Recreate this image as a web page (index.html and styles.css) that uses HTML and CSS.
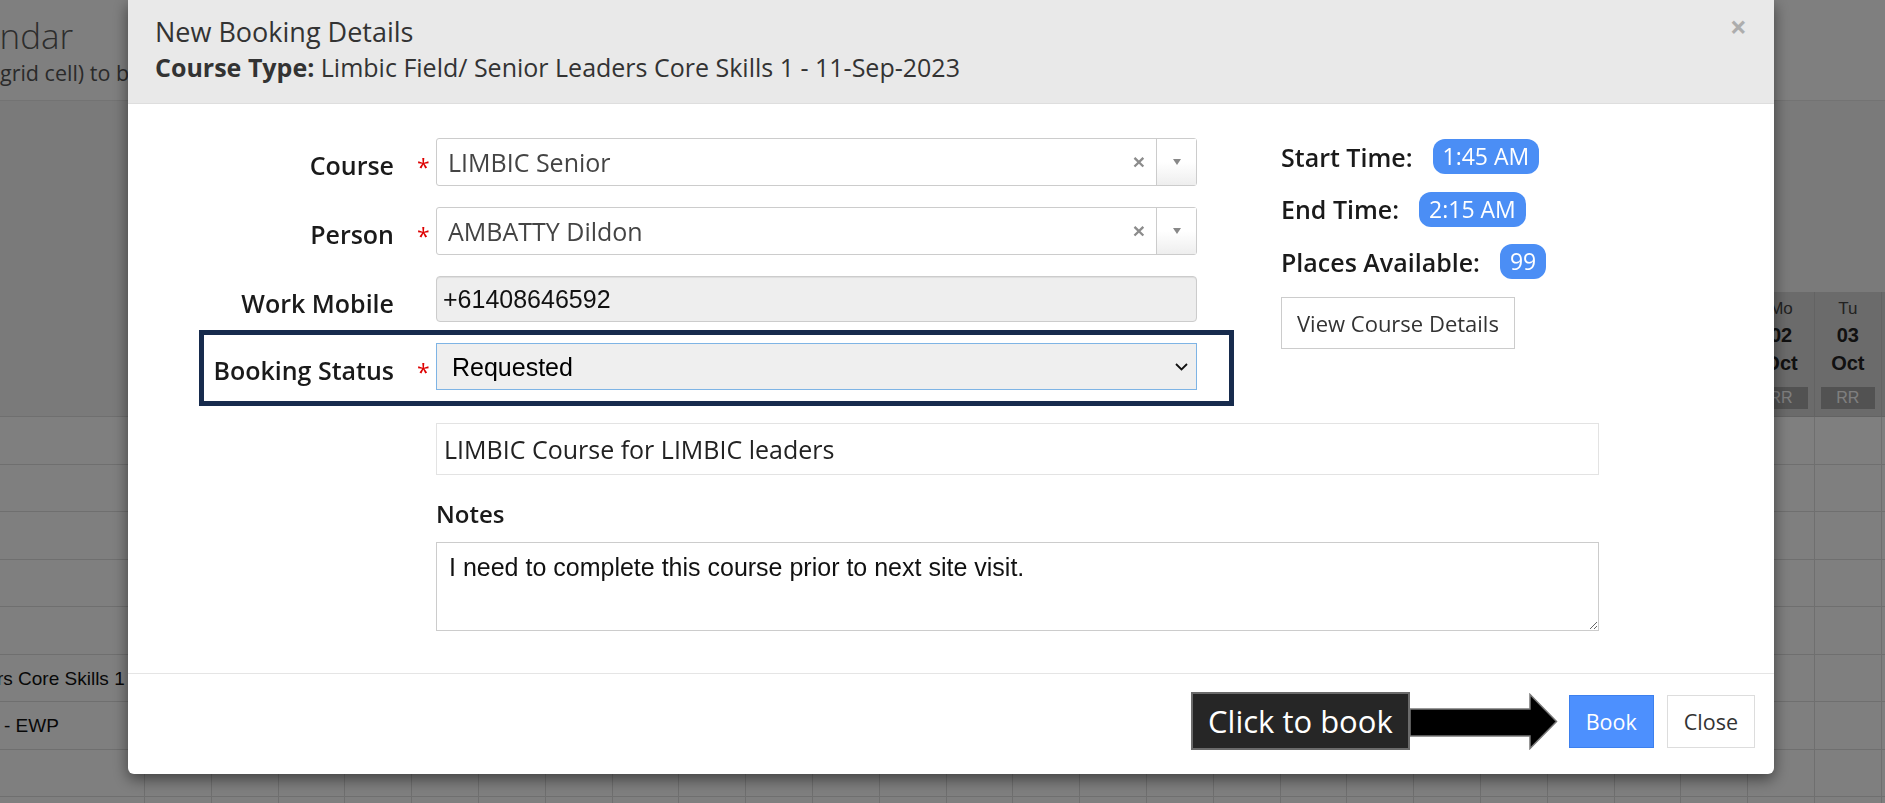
FILE: index.html
```html
<!DOCTYPE html>
<html>
<head>
  <meta charset="UTF-8" />
  <title>Course Calendar: New Booking</title>
  <link rel="stylesheet" href="styles.css">
  <script src="calendar.js"></script>
</head>
<body>
  <div class="page">
    <header class="page-head">
      <h1>Course Calendar</h1>
      <p>Click a time slot (grid cell) to book a course.</p>
    </header>
    <div class="filters"></div>
    <div class="calendar" id="calendar"></div>
  </div>

  <div class="backdrop"></div>

  <div class="modal">
    <div class="modal-header">
      <span class="close">&times;</span>
      <h4>New Booking Details</h4>
      <div class="course-type"><b>Course Type:</b> Limbic Field/ Senior Leaders Core Skills 1 - 11-Sep-2023</div>
    </div>

    <div class="modal-body">
      <div class="top">
        <div class="form">
          <div class="row">
            <label>Course</label>
            <span class="req">*</span>
            <div class="select2">
              <span class="value">LIMBIC Senior</span>
              <span class="clear">&times;</span>
              <span class="arrow"><b></b></span>
            </div>
          </div>
          <div class="row">
            <label>Person</label>
            <span class="req">*</span>
            <div class="select2">
              <span class="value">AMBATTY Dildon</span>
              <span class="clear">&times;</span>
              <span class="arrow"><b></b></span>
            </div>
          </div>
          <div class="row">
            <label>Work Mobile</label>
            <span class="req"></span>
            <input class="mobile" type="text" value="+61408646592" readonly />
          </div>
          <div class="row highlight">
            <label>Booking Status</label>
            <span class="req">*</span>
            <div class="status">
              <select>
                <option>Requested</option>
                <option>Confirmed</option>
                <option>Cancelled</option>
              </select>
              <svg viewBox="0 0 13 8" width="13" height="8"><path d="M1 1l5.5 5.5L12 1" fill="none" stroke="#111" stroke-width="1.8"/></svg>
            </div>
          </div>
        </div>

        <div class="info">
          <div class="info-row"><span class="info-label">Start Time:</span><span class="badge">1:45 AM</span></div>
          <div class="info-row"><span class="info-label">End Time:</span><span class="badge">2:15 AM</span></div>
          <div class="info-row"><span class="info-label">Places Available:</span><span class="badge">99</span></div>
          <button class="btn">View Course Details</button>
        </div>
      </div>

      <input class="description" type="text" value="LIMBIC Course for LIMBIC leaders" readonly />
      <div class="notes-label">Notes</div>
      <textarea class="notes">I need to complete this course prior to next site visit.</textarea>
    </div>

    <div class="modal-footer">
      <div class="callout">Click to book</div>
      <svg class="pointer" viewBox="0 0 148 57" width="148" height="57">
        <polygon points="0,16 120,16 120,1.5 146.5,28.5 120,55.5 120,43 0,43" fill="#000" stroke="#777" stroke-width="1.5"/>
      </svg>
      <button class="btn btn-primary">Book</button>
      <button class="btn">Close</button>
    </div>
  </div>
</body>
</html>
```

FILE: styles.css
```css
body {
  margin: 0;
  width: 1885px;
  height: 803px;
  overflow: hidden;
  background: #fff;
  font-family: "Open Sans", sans-serif;
  color: #333;
}

/* page behind the dialog, scrolled sideways */
.page {
  margin-left: -239px;
  width: 2600px;
}
.page-head {
  height: 100px;
  border-bottom: 1px solid #e6e6e6;
  white-space: nowrap;
}
.page-head h1 {
  margin: 0;
  padding: 14px 0 0 50px;
  font-size: 35px;
  font-weight: 300;
  line-height: 44px;
  color: #5a5a5a;
}
.page-head p {
  margin: 0;
  padding-left: 71px;
  font-size: 21.5px;
  line-height: 30px;
  color: #555;
}
.filters {
  height: 191px;
  background: #f4f4f4;
}

.calendar {
  display: grid;
  grid-template-columns: 384px repeat(28, 66.8px);
  grid-template-rows: 125px;
  grid-auto-rows: 47.5px;
  font-family: "Liberation Sans", Arial, sans-serif;
}
.calendar .cell {
  box-sizing: border-box;
  border-right: 1px solid #dedede;
  border-bottom: 1px solid #dedede;
}
.calendar .name-head {
  background: #f4f4f4;
}
.calendar .day-head {
  padding-top: 7px;
  background: #d6d6d6;
  border-right-color: #c6c6c6;
  border-bottom-color: #c6c6c6;
  text-align: center;
}
.calendar .dow {
  font-size: 17px;
  line-height: 20px;
  color: #444;
}
.calendar .date,
.calendar .month {
  font-size: 20px;
  font-weight: bold;
  line-height: 28px;
  color: #222;
}
.calendar .date {
  margin-top: 2px;
}
.calendar .tag {
  margin: 10px 6px 0;
  height: 22px;
  line-height: 22px;
  font-size: 16px;
  background: #a4a4a4;
  color: #fff;
}
.calendar .name {
  padding-left: 11px;
  font-size: 19px;
  line-height: 47.5px;
  white-space: nowrap;
  color: #111;
}

/* dialog */
.backdrop {
  position: fixed;
  inset: 0;
  background: rgba(0, 0, 0, 0.5);
}
.modal {
  position: fixed;
  top: 0;
  left: 128px;
  width: 1646px;
  background: #fff;
  border-radius: 0 0 6px 6px;
  box-shadow: 0 5px 15px rgba(0, 0, 0, 0.5);
}

.modal-header {
  position: relative;
  padding: 15px 27px 21px;
  background: #e9e9e9;
  border-bottom: 1px solid #dedede;
}
.modal-header h4 {
  margin: 0;
  font-size: 27px;
  font-weight: 400;
  line-height: 34px;
  color: #333;
}
.modal-header .course-type {
  margin-top: 3px;
  font-size: 25px;
  line-height: 30px;
  color: #333;
}
.modal-header .close {
  position: absolute;
  top: 12px;
  right: 27px;
  font-size: 30px;
  font-weight: 700;
  line-height: 30px;
  color: #000;
  opacity: 0.25;
}

.modal-body {
  padding: 29px 0 42px;
}
.top {
  display: flex;
}
.form {
  margin-left: 71px;
}
.row {
  display: grid;
  grid-template-columns: 190px 42px 761px;
  align-items: start;
  border: 5px solid transparent;
  padding-right: 32px;
  margin-bottom: 11px;
}
.row > label {
  padding-top: 10px;
  font-size: 25px;
  font-weight: 600;
  line-height: 34px;
  text-align: right;
  white-space: nowrap;
  color: #1a1a1a;
}
.row > .req {
  padding: 12px 0 0 23px;
  font-size: 23px;
  line-height: 34px;
  color: #d00;
}
.row.highlight {
  margin-top: -8px;
  margin-bottom: 0;
  padding-top: 8px;
  padding-bottom: 11px;
  border-color: #172b4d;
}

.select2 {
  display: flex;
  align-items: center;
  box-sizing: border-box;
  height: 48px;
  background: #fff;
  border: 1px solid #ccc;
  border-radius: 3px;
}
.select2 .value {
  flex: 1;
  padding-left: 11px;
  font-size: 25px;
  line-height: 46px;
  color: #444;
}
.select2 .clear {
  width: 34px;
  text-align: center;
  font-family: "Liberation Sans", Arial, sans-serif;
  font-size: 21px;
  font-weight: bold;
  color: #8c8c8c;
}
.select2 .arrow {
  display: flex;
  align-items: center;
  justify-content: center;
  align-self: stretch;
  width: 39px;
  border-left: 1px solid #ccc;
  background: linear-gradient(#fff 50%, #eee);
}
.select2 .arrow b {
  border-left: 4px solid transparent;
  border-right: 4px solid transparent;
  border-top: 6px solid #888;
}

.mobile {
  box-sizing: border-box;
  width: 761px;
  height: 46px;
  margin: 0;
  padding: 0 6px;
  border: 1px solid #ccc;
  border-radius: 4px;
  background: #eee;
  box-shadow: inset 0 1px 1px rgba(0, 0, 0, 0.075);
  font-family: "Liberation Sans", Arial, sans-serif;
  font-size: 25px;
  color: #111;
}

.status {
  position: relative;
}
.status select {
  appearance: none;
  box-sizing: border-box;
  width: 100%;
  height: 47px;
  margin: 0;
  padding: 0 40px 0 15px;
  border: 1px solid #7eb4e5;
  border-radius: 0;
  background: #efefef;
  font-family: "Liberation Sans", Arial, sans-serif;
  font-size: 25px;
  color: #000;
}
.status svg {
  position: absolute;
  top: 20px;
  right: 9px;
}

.info {
  margin-left: 47px;
  padding-top: 6px;
}
.info-row {
  display: flex;
  align-items: center;
  gap: 20px;
  height: 35px;
  margin-bottom: 17.5px;
}
.info-label {
  font-size: 25px;
  font-weight: 600;
  line-height: 34px;
  color: #1a1a1a;
}
.badge {
  padding: 0 10px;
  border-radius: 12px;
  background: #4b8ef5;
  color: #fff;
  font-size: 23px;
  line-height: 35px;
}

.btn {
  box-sizing: border-box;
  height: 52px;
  margin: 0;
  padding: 0 15px;
  border: 1px solid #ccc;
  background: #fff;
  font-family: "Open Sans", sans-serif;
  font-size: 22px;
  color: #333;
}

.description,
.notes,
.notes-label {
  display: block;
  margin-left: 308px;
}
.description {
  box-sizing: border-box;
  width: 1163px;
  height: 52px;
  margin-top: 17px;
  padding: 0 7px;
  border: 1px solid #e3e3e3;
  font-family: "Open Sans", sans-serif;
  font-size: 25px;
  color: #222;
}
.notes-label {
  margin-top: 22px;
  margin-bottom: 12px;
  font-size: 24px;
  font-weight: 600;
  line-height: 33px;
  color: #1a1a1a;
}
.notes {
  box-sizing: border-box;
  width: 1163px;
  height: 89px;
  padding: 10px 12px;
  border: 1px solid #ccc;
  font-family: "Liberation Sans", Arial, sans-serif;
  font-size: 25px;
  color: #111;
  resize: vertical;
}

.modal-footer {
  display: flex;
  align-items: center;
  justify-content: flex-end;
  padding: 18px 19px 24px;
  border-top: 1px solid #e5e5e5;
}
.callout {
  box-sizing: border-box;
  height: 58px;
  padding: 0 15px;
  border: 2px solid #6b6b6b;
  background: #262626;
  color: #fff;
  font-size: 31px;
  line-height: 54px;
}
.pointer {
  display: block;
  margin-right: 11px;
}
.modal-footer .btn {
  height: 53px;
  padding: 0 16px;
  font-size: 21.5px;
  border-color: #ddd;
}
.modal-footer .btn-primary {
  margin-right: 13px;
  background: #4d90fe;
  border-color: #3d80ee;
  color: #fff;
}
```

FILE: calendar.js
```js
window.addEventListener('DOMContentLoaded', () => {

  const calendar = document.getElementById('calendar')
  const weekdays = ['Su', 'Mo', 'Tu', 'We', 'Th', 'Fr', 'Sa']
  const months   = ['Jan', 'Feb', 'Mar', 'Apr', 'May', 'Jun', 'Jul', 'Aug', 'Sep', 'Oct', 'Nov', 'Dec']
  const first    = new Date(2023, 8, 8)
  const count    = 28

  const courses = [
    'First Aid',
    'Fire Warden',
    'Manual Handling',
    'Site Induction',
    'Forklift Refresher',
    'Limbic Field/ Senior Leaders Core Skills 1',
    'Working at Heights Level 1 - EWP',
    'Confined Space',
    'Chainsaw Basics'
  ]

  const cell = (className, html) => {
    const div = document.createElement('div')
    div.className = 'cell ' + className
    if (html)
      div.innerHTML = html
    calendar.appendChild(div)
  }

  cell('name-head')

  for (let i = 0; i < count; i++) {
    const day = new Date(first.getFullYear(), first.getMonth(), first.getDate() + i)

    cell('day-head',
      '<div class="dow">'   + weekdays[day.getDay()] + '</div>' +
      '<div class="date">'  + String(day.getDate()).padStart(2, '0') + '</div>' +
      '<div class="month">' + months[day.getMonth()] + '</div>' +
      '<div class="tag">RR</div>')
  }

  courses.forEach(name => {
    cell('name', name)
    for (let i = 0; i < count; i++)
      cell('slot')
  })
})
```
